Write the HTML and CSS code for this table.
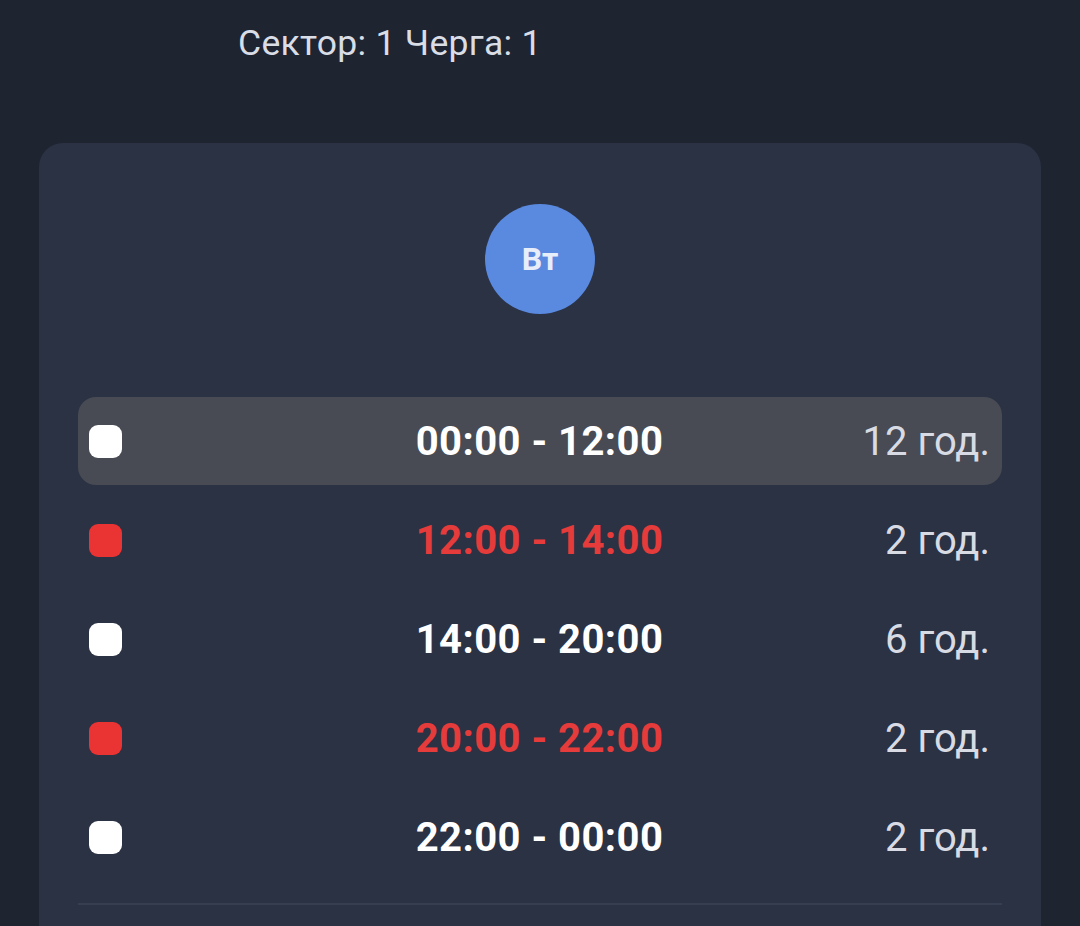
FILE: index.html
```html
<!DOCTYPE html>
<html lang="uk">
<head>
<meta charset="utf-8">
<link rel="stylesheet" href="styles.css">
</head>
<body>
<div class="page">
  <div class="header">Сектор: 1 Черга: 1</div>
  <div class="card">
    <div class="day-wrap"><div class="day">Вт</div></div>
    <div class="rows">
      <div class="row active">
        <span class="box"></span>
        <span class="time">00:00 - 12:00</span>
        <span class="dur">12 год.</span>
      </div>
      <div class="row off">
        <span class="box"></span>
        <span class="time">12:00 - 14:00</span>
        <span class="dur">2 год.</span>
      </div>
      <div class="row">
        <span class="box"></span>
        <span class="time">14:00 - 20:00</span>
        <span class="dur">6 год.</span>
      </div>
      <div class="row off">
        <span class="box"></span>
        <span class="time">20:00 - 22:00</span>
        <span class="dur">2 год.</span>
      </div>
      <div class="row">
        <span class="box"></span>
        <span class="time">22:00 - 00:00</span>
        <span class="dur">2 год.</span>
      </div>
    </div>
    <div class="divider"></div>
  </div>
</div>
</body>
</html>
```
FILE: styles.css
```css
html, body {
  margin: 0;
  padding: 0;
  background: #1f2431;
  font-family: Roboto, "Noto Sans", sans-serif;
  overflow: hidden;
}
.page {
  width: 1080px;
  height: 926px;
  padding: 0 39px;
  box-sizing: border-box;
  display: flex;
  flex-direction: column;
  overflow: hidden;
}
.header {
  padding: 21px 0 0 199px;
  height: 143px;
  flex: none;
  box-sizing: border-box;
  font-size: 35.5px;
  line-height: 44px;
  letter-spacing: 0.3px;
  color: #d9dde6;
}
.card {
  flex: 1;
  background: #2a3244;
  border-radius: 24px 24px 0 0;
  padding: 61px 39px 0;
  box-sizing: border-box;
}
.day-wrap {
  display: flex;
  justify-content: center;
  margin-bottom: 83px;
}
.day {
  width: 110px;
  height: 110px;
  border-radius: 50%;
  background: #5a89e0;
  color: #e8eef9;
  font-weight: 700;
  font-size: 32px;
  display: flex;
  align-items: center;
  justify-content: center;
}
.rows {
  display: flex;
  flex-direction: column;
  gap: 11px;
}
.row {
  height: 88px;
  border-radius: 18px;
  display: grid;
  grid-template-columns: 1fr auto 1fr;
  align-items: center;
  padding: 0 12px 0 11px;
}
.row.active {
  background: #484b53;
}
.box {
  width: 33px;
  height: 33px;
  border-radius: 9px;
  background: #ffffff;
}
.row.off .box {
  background: #ea3434;
}
.time {
  font-size: 40px;
  font-weight: 700;
  color: #ffffff;
  letter-spacing: 0.45px;
}
.row.off .time {
  color: #e63b3b;
}
.dur {
  justify-self: end;
  font-size: 40px;
  color: #d8dbe3;
}
.divider {
  height: 2px;
  background: #363f52;
  margin-top: 22px;
}
```
